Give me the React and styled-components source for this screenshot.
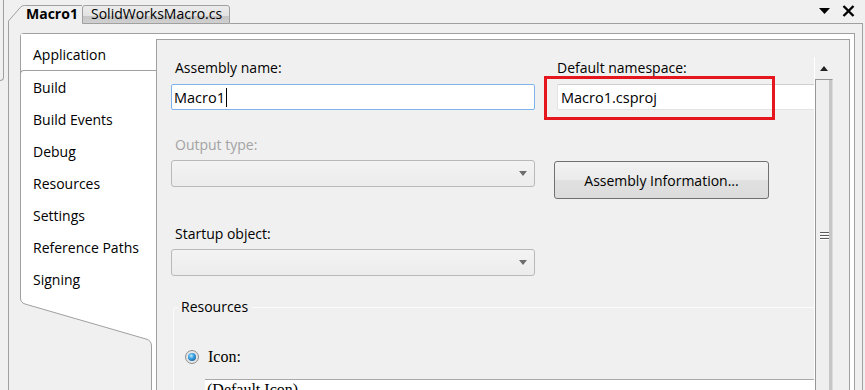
import React from "react";
import styled, { createGlobalStyle } from "styled-components";

const line = "#a0a0a0";
const uiFont = `"Open Sans", "Noto Sans", sans-serif`;
const oldFont = `"Liberation Serif", serif`;

const GlobalStyle = createGlobalStyle`
	html, body {
		margin: 0;
		padding: 0;
		background: #f0f0f0;
	}
	body {
		font-family: ${uiFont};
		font-size: 14px;
		color: #000;
	}
`;

const Screen = styled.div`
	display: flex;
	width: 865px;
	height: 390px;
	overflow: hidden;
	background: #f0f0f0;
`;

const LeftStub = styled.div`
	flex: none;
	width: 3px;
	height: 80px;
	margin-right: 4px;
	border-right: 1px solid ${line};
	border-bottom: 1px solid ${line};
	border-bottom-right-radius: 4px;
`;

const Doc = styled.div`
	flex: none;
	width: 855px;
	display: flex;
	flex-direction: column;
`;

const Header = styled.div`
	display: flex;
	align-items: flex-end;
	height: 24px;
	flex: none;
`;

const ActiveTab = styled.div`
	position: relative;
	width: 74px;
	height: 19px;
	padding-left: 18px;
	box-sizing: border-box;
	font-weight: 700;
	font-size: 14px;
	line-height: 18px;
	svg {
		position: absolute;
		left: 0;
		top: 0;
	}
`;

const InactiveTab = styled.div`
	width: 148px;
	height: 19px;
	box-sizing: border-box;
	padding-left: 8px;
	border: 1px solid ${line};
	border-radius: 3px 3px 0 0;
	background: linear-gradient(#ececec 0%, #e2e2e2 58%, #c6c6c6 62%, #d0d0d0 100%);
	font-size: 14px;
	line-height: 16px;
`;

const HeaderRest = styled.div`
	flex: 1;
	height: 24px;
	box-sizing: border-box;
	border-bottom: 1px solid ${line};
	display: flex;
	justify-content: flex-end;
	align-items: center;
	gap: 12px;
	padding-right: 8px;
	padding-bottom: 1px;
`;

const Body = styled.div`
	flex: 1;
	display: flex;
	min-height: 0;
	border-left: 1px solid ${line};
	border-right: 1px solid ${line};
	padding: 9px 7px 0 11px;
`;

const Frame = styled.div`
	flex: 1;
	display: flex;
	min-width: 0;
	background: #fff;
	border: 1px solid ${line};
	border-bottom: none;
	border-top-left-radius: 4px;
`;

const TabColumn = styled.div`
	flex: none;
	width: 135px;
	display: flex;
	flex-direction: column;
	background: #fff;
`;

const AppTab = styled.div`
	height: 36px;
	box-sizing: border-box;
	padding: 11px 0 0 12px;
	line-height: 20px;
	font-size: 14px;
`;

const TabList = styled.div`
	margin-left: -1px;
	border-left: 1px solid ${line};
	border-top: 1px solid ${line};
	border-top-left-radius: 4px;
	padding-left: 12px;
	padding-top: 1px;
`;

const TabItem = styled.div`
	height: 32px;
	line-height: 32px;
	font-size: 14px;
	white-space: nowrap;
`;

const Slant = styled.svg`
	display: block;
	margin-left: -1px;
	flex: 1;
`;

const Content = styled.div`
	flex: 1;
	min-width: 0;
	display: flex;
	margin: 5px 4px 0 0;
	padding-top: 17px;
	background: #f0f0f0;
	border: 1px solid ${line};
	border-bottom: none;
	overflow: hidden;
`;

const FormArea = styled.div`
	width: 657px;
	flex: none;
	overflow: hidden;
	padding-left: 14px;
	box-sizing: border-box;
`;

const Columns = styled.div`
	display: flex;
	gap: 19px;
`;

const Column = styled.div`
	position: relative;
	display: flex;
	flex-direction: column;
	width: ${(p) => p.$width}px;
	flex: none;
`;

const Label = styled.div`
	height: 20px;
	line-height: 20px;
	margin-top: ${(p) => p.$top || 0}px;
	padding-left: ${(p) => p.$indent || 4}px;
	font-size: 14px;
	color: ${(p) => (p.$disabled ? "#a3a3a3" : "#000")};
	white-space: nowrap;
`;

const TextBox = styled.div`
	height: 26px;
	box-sizing: border-box;
	margin-top: 6px;
	margin-left: ${(p) => p.$indent || 0}px;
	padding-left: ${(p) => p.$pad || 2}px;
	background: #fff;
	border: 1px solid ${(p) => (p.$focused ? "#7eb4ea" : "#e3e3e3")};
	border-top-color: ${(p) => (p.$focused ? "#7eb4ea" : "#cfcfcf")};
	border-radius: 2px;
	display: flex;
	align-items: center;
	font-size: 14.5px;
	white-space: nowrap;
`;

const Caret = styled.span`
	display: inline-block;
	width: 1px;
	height: 19px;
	margin-left: 1px;
	background: #000;
`;

const Combo = styled.div`
	height: 27px;
	box-sizing: border-box;
	margin-top: 5px;
	border: 1px solid #b9b9b9;
	border-radius: 3px;
	background: linear-gradient(#f3f3f3, #ececec);
	display: flex;
	justify-content: flex-end;
	align-items: center;
	padding-right: 7px;
	&::after {
		content: "";
		border-left: 4px solid transparent;
		border-right: 4px solid transparent;
		border-top: 5px solid #6d6d6d;
	}
`;

const Highlight = styled.div`
	position: absolute;
	left: -10px;
	top: 19px;
	width: 231px;
	height: 44px;
	box-sizing: border-box;
	border: 3px solid #e5161e;
	pointer-events: none;
`;

const Button = styled.div`
	width: 215px;
	height: 38px;
	box-sizing: border-box;
	margin-top: 51px;
	border: 1px solid #707070;
	border-radius: 3px;
	background: linear-gradient(#f2f2f2, #ebebeb 50%, #e0e0e0 51%, #dcdcdc);
	display: flex;
	align-items: center;
	justify-content: center;
	font-size: 14px;
	white-space: nowrap;
`;

const Group = styled.fieldset`
	margin: 21px 0 0 2px;
	width: 700px;
	box-sizing: border-box;
	padding: 0 0 0 11px;
	border: 1px solid #fbfbfb;
	border-top-left-radius: 3px;
	height: 120px;
	legend {
		margin-left: -7px;
		padding: 0 3px;
		height: 20px;
		line-height: 20px;
		font-size: 14px;
	}
`;

const RadioRow = styled.div`
	display: flex;
	align-items: center;
	gap: 9px;
	margin-top: 30px;
	height: 20px;
`;

const Radio = styled.span`
	width: 14px;
	height: 14px;
	box-sizing: border-box;
	border-radius: 50%;
	border: 1px solid #8c8f91;
	background: radial-gradient(circle, #f4f4f4, #dcdcdc);
	display: flex;
	align-items: center;
	justify-content: center;
	&::after {
		content: "";
		width: 8px;
		height: 8px;
		border-radius: 50%;
		background: radial-gradient(circle at 40% 35%, #b8ecff 0%, #3b9ee0 40%, #0f4c80 100%);
	}
`;

const SerifText = styled.span`
	font-family: ${oldFont};
	font-size: 16px;
`;

const IconBox = styled.div`
	margin: 12px 0 0 20px;
	height: 30px;
	box-sizing: border-box;
	border-top: 1px solid #a9a9a9;
	background: #fff;
	padding: 1px 0 0 2px;
	font-family: ${oldFont};
	font-size: 16px;
	line-height: 18px;
`;

const ScrollBar = styled.div`
	flex: none;
	width: 19px;
	box-sizing: border-box;
	border-left: 1px solid #fff;
	display: flex;
	flex-direction: column;
`;

const UpButton = styled.div`
	height: 22px;
	display: flex;
	align-items: center;
	justify-content: center;
	&::after {
		content: "";
		border-left: 4.5px solid transparent;
		border-right: 4.5px solid transparent;
		border-bottom: 5px solid #222;
	}
`;

const Thumb = styled.div`
	flex: 1;
	border-left: 1px solid #979797;
	border-top: 1px solid #979797;
	border-right: 1px solid #dcdcdc;
	background: linear-gradient(to right, #efefef 0, #efefef 13px, #c6c6c6 13px, #c6c6c6 17px);
	padding: 152px 0 0 4px;
`;

const Grip = styled.div`
	width: 9px;
	height: 2px;
	margin-bottom: 1px;
	background: linear-gradient(#5a5a5a 50%, #fff 50%);
`;

const navItems = ["Build", "Build Events", "Debug", "Resources", "Settings", "Reference Paths", "Signing"];

export default function App() {
	return (
		<>
			<GlobalStyle />
			<Screen>
				<LeftStub />
				<Doc>
					<Header>
						<ActiveTab>
							<svg width="74" height="19" viewBox="0 0 74 19">
								<path d="M0.5 19 L0.5 16 L12.5 2.2 Q14 0.5 16.5 0.5 L74 0.5" fill="none" stroke={line} />
							</svg>
							Macro1
						</ActiveTab>
						<InactiveTab>SolidWorksMacro.cs</InactiveTab>
						<HeaderRest>
							<svg width="11" height="6" viewBox="0 0 11 6">
								<path d="M0 0 H11 L5.5 6 Z" fill="#000" />
							</svg>
							<svg width="13" height="12" viewBox="0 0 13 12">
								<path d="M1.5 1 L11.5 11 M11.5 1 L1.5 11" stroke="#000" strokeWidth="2.4" />
							</svg>
						</HeaderRest>
					</Header>
					<Body>
						<Frame>
							<TabColumn>
								<AppTab>Application</AppTab>
								<TabList>
									{navItems.map((item) => (
										<TabItem key={item}>{item}</TabItem>
									))}
								</TabList>
								<Slant width="136" height="94" viewBox="0 0 136 94" preserveAspectRatio="xMinYMin slice">
									<rect x="0" y="0" width="136" height="200" fill="#f0f0f0" />
									<path d="M0 0 V2 Q0 6.5 5 8 L126 43 Q131 44.5 131 50 V200 H136 V0 Z" fill="#fff" />
									<path d="M0.5 0 V2 Q0.5 6.5 5 8 L126 43 Q131.5 44.5 131.5 50 V200" fill="none" stroke={line} />
								</Slant>
							</TabColumn>
							<Content>
								<FormArea>
									<Columns>
										<Column $width={364}>
											<Label $top={1}>Assembly name:</Label>
											<TextBox $focused>
												Macro1
												<Caret />
											</TextBox>
											<Label $top={25} $disabled>
												Output type:
											</Label>
											<Combo />
											<Label $top={37}>Startup object:</Label>
											<Combo />
										</Column>
										<Column $width={280}>
											<Label $top={1} $indent={3}>
												Default namespace:
											</Label>
											<TextBox $indent={3} $pad={3}>
												Macro1.csproj
											</TextBox>
											<Highlight />
											<Button>Assembly Information...</Button>
										</Column>
									</Columns>
									<Group>
										<legend>Resources</legend>
										<RadioRow>
											<Radio />
											<SerifText>Icon:</SerifText>
										</RadioRow>
										<IconBox>(Default Icon)</IconBox>
									</Group>
								</FormArea>
								<ScrollBar>
									<UpButton />
									<Thumb>
										<Grip />
										<Grip />
										<Grip />
									</Thumb>
								</ScrollBar>
							</Content>
						</Frame>
					</Body>
				</Doc>
			</Screen>
		</>
	);
}
